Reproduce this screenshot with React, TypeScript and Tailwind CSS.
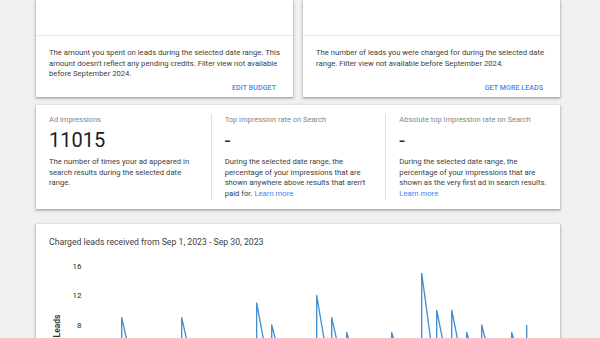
import React from "react";

const leads: Record<number, number> = {
  2: 9, 6: 9, 11: 11, 12: 8, 15: 12, 16: 9, 17: 7, 20: 7,
  22: 15, 23: 10, 24: 10, 25: 7, 26: 8, 28: 7, 29: 8,
};

const xOf = (i: number) => 55.7 + 15 * i;
const yOf = (v: number) => 136 - 7.375 * v;

function buildPath() {
  let d = `M ${xOf(0)} ${yOf(0)}`;
  for (let i = 0; i < 30; i++) {
    const v = leads[i];
    if (v) {
      d += ` L ${xOf(i)} ${yOf(0)} L ${xOf(i)} ${yOf(v)}`;
      if (i < 29) d += ` L ${xOf(i + 1)} ${yOf(0)}`;
    } else if (i > 0) {
      d += ` L ${xOf(i)} ${yOf(0)}`;
    }
  }
  return d;
}

const cardShadow =
  "shadow-[0_1px_2px_rgba(0,0,0,0.28),0_1px_3px_1px_rgba(0,0,0,0.12)]";

const SummaryCard = ({ text, action }: { text: string; action: string }) => (
  <div className={`bg-white flex flex-col ${cardShadow}`}>
    <div className="h-[36px] border-b border-[#e8eaed]" />
    <p className="pl-[13px] pr-[12px] pt-[12px] text-[7.7px] leading-[10.6px] text-[#3c4043]">
      {text}
    </p>
    <div className="mt-auto flex justify-end pr-[17px] pb-[4px]">
      <span className="text-[7px] leading-[10px] font-medium tracking-[0.1px] text-[#4285f4]">
        {action}
      </span>
    </div>
  </div>
);

const Metric = ({
  label,
  value,
  children,
  first,
}: {
  label: string;
  value: string;
  children: React.ReactNode;
  first?: boolean;
}) => (
  <div className={`pl-[13px] pr-[10px] ${first ? "" : "border-l border-[#e0e0e0]"}`}>
    <div className="pt-[1px] text-[7.5px] leading-[10px] text-[#80868b]">{label}</div>
    <div className="mt-[3px] text-[20px] leading-[24px] text-[#202124]">{value}</div>
    <p className="mt-[5px] text-[7.7px] leading-[10.7px] text-[#3c4043]">{children}</p>
  </div>
);

const LearnMore = () => <span className="text-[#4285f4]">Learn more</span>;

export default function App() {
  return (
    <div
      className="w-[600px] h-[338px] overflow-hidden bg-[#f1f1f1]"
      style={{ fontFamily: "Roboto, 'Noto Sans', sans-serif" }}
    >
      <div className="ml-[36px] w-[524px]">
        {/* Spend / leads cards */}
        <div className="grid grid-cols-2 gap-[10px] h-[97px]">
          <SummaryCard
            text="The amount you spent on leads during the selected date range. This amount doesn't reflect any pending credits. Filter view not available before September 2024."
            action="EDIT BUDGET"
          />
          <SummaryCard
            text="The number of leads you were charged for during the selected date range. Filter view not available before September 2024."
            action="GET MORE LEADS"
          />
        </div>

        {/* Impressions */}
        <div className={`mt-[8px] h-[104px] bg-white py-[9px] grid grid-cols-3 ${cardShadow}`}>
          <Metric first label="Ad impressions" value="11015">
            The number of times your ad appeared in search results during the selected date range.
          </Metric>
          <Metric label="Top impression rate on Search" value="-">
            During the selected date range, the percentage of your impressions that are shown anywhere above results that aren't paid for. <LearnMore />
          </Metric>
          <Metric label="Absolute top impression rate on Search" value="-">
            During the selected date range, the percentage of your impressions that are shown as the very first ad in search results. <LearnMore />
          </Metric>
        </div>

        {/* Chart */}
        <div className={`mt-[15px] bg-white h-[200px] ${cardShadow}`}>
          <div className="px-[13px] pt-[12px] text-[8.7px] leading-[12px] text-[#3c4043]">
            Charged leads received from Sep 1, 2023 - Sep 30, 2023
          </div>
          <svg width="524" height="140" className="block">
            <g fontFamily="Roboto, sans-serif" fontSize="8" fill="#222" textAnchor="end">
              <text x="45.5" y="21">16</text>
              <text x="45.5" y="50.3">12</text>
              <text x="45.5" y="80">8</text>
            </g>
            <text
              x="0"
              y="0"
              transform="translate(24.3 78) rotate(-90)"
              fontFamily="Roboto, sans-serif"
              fontSize="8.5"
              fontWeight="600"
              fill="#333"
              textAnchor="middle"
            >
              Leads
            </text>
            <path d={buildPath()} fill="none" stroke="#3d8ed2" strokeWidth="1.3" strokeLinejoin="round" />
          </svg>
        </div>
      </div>
    </div>
  );
}
